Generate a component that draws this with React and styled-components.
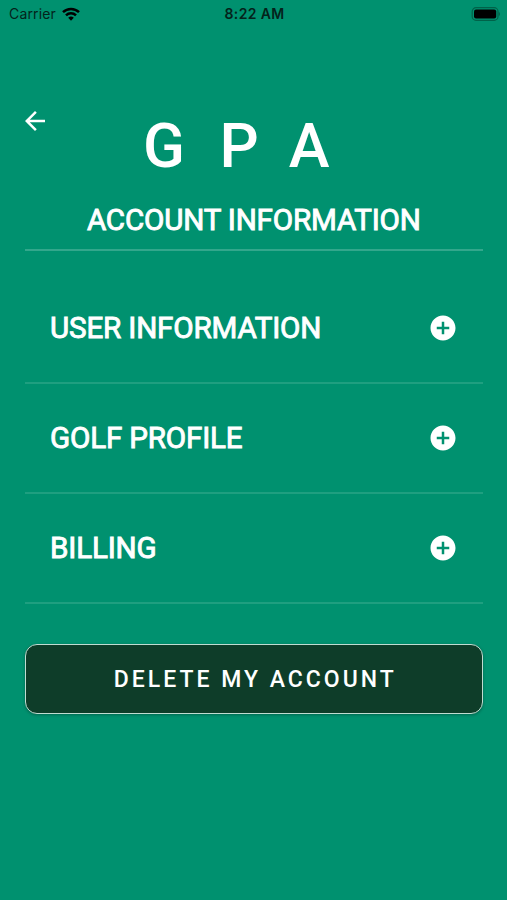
import React, { useState } from 'react';
import styled, { createGlobalStyle } from 'styled-components';
import { MdAddCircle, MdArrowBack } from 'react-icons/md';

const GlobalStyle = createGlobalStyle`
    * {
        box-sizing: border-box;
    }
    body {
        margin: 0;
        background-color: #00916f;
    }
`
const Container = styled.div`
    width: 100%;
    height: 100vh;
    display: flex;
    flex-direction: column;
    overflow: hidden;
    background-color: #00916f;
    color: white;
    font-family: Roboto, "Liberation Sans", sans-serif;
`
const StatusBar = styled.div`
    height: 28px;
    padding: 0 7px 0 9px;
    display: grid;
    grid-template-columns: 1fr auto 1fr;
    align-items: center;
    color: #04231b;
    font-family: Inter, "Liberation Sans", sans-serif;
    font-size: 14px;
    line-height: 28px;
`
const Carrier = styled.div`
    display: flex;
    align-items: center;
    gap: 6px;
    letter-spacing: 0.15px;
`
const Clock = styled.div`
    font-weight: 600;
    letter-spacing: 0.35px;
`
const Battery = styled.svg`
    justify-self: end;
`
const Header = styled.div`
    height: 172px;
    padding: 78px 20px 0;
    display: grid;
    grid-template-columns: 30px 1fr 30px;
`
const BackButton = styled.button`
    width: 30px;
    height: 30px;
    padding: 0;
    border: none;
    background-color: transparent;
    color: white;
    cursor: pointer;
    svg {
        display: block;
    }
`
const Logo = styled.h1`
    margin: 4px 0 0;
    font-size: 61.5px;
    font-weight: 500;
    line-height: 72px;
    letter-spacing: 34.5px;
    text-align: center;
    white-space: nowrap;
`
const Content = styled.div`
    padding: 0 24.5px 0 25px;
`
const Title = styled.h2`
    height: 51px;
    margin: 0 0 23px;
    border-bottom: 2px solid #33a78c;
    font-size: 29.6px;
    font-weight: 400;
    line-height: 40px;
    letter-spacing: -0.18px;
    text-align: center;
    white-space: nowrap;
    -webkit-text-stroke: 0.9px white;
`
const Section = styled.div`
    height: 110px;
    padding: 0 24.5px 0 25px;
    display: flex;
    align-items: center;
    justify-content: space-between;
    border-bottom: 2px solid #1f9f80;
    cursor: pointer;
`
const SectionTitle = styled.h3`
    margin: 0;
    font-size: 29.6px;
    font-weight: 400;
    line-height: 36px;
    letter-spacing: -0.18px;
    white-space: nowrap;
    -webkit-text-stroke: 0.9px white;
`
const Button = styled.button`
    width: 100%;
    height: 70px;
    margin-top: 40px;
    padding: 0 0 0 3px;
    border: 1px solid #c0dcd1;
    border-radius: 12px;
    background-color: #0e3d29;
    box-shadow: 0 1px 3px rgba(0, 0, 0, 0.3);
    color: white;
    font-family: inherit;
    font-size: 23px;
    font-weight: 500;
    letter-spacing: 3px;
    cursor: pointer;
`

const sections = [
    { id: 1, title: "USER INFORMATION" },
    { id: 2, title: "GOLF PROFILE" },
    { id: 3, title: "BILLING" },
]

const App = () => {
    const [active, setActive] = useState(null);

  return (
    <Container>
        <GlobalStyle/>
        <StatusBar>
            <Carrier>
                Carrier
                <svg width="18" height="14" viewBox="0 0 18 14" fill="none" stroke="#000" strokeWidth="2.5">
                    <path d="M1 5.2a11.4 11.4 0 0 1 16 0"/>
                    <path d="M4 8.4a7.1 7.1 0 0 1 10 0"/>
                    <path d="M9 13.7 6.2 10.8a4 4 0 0 1 5.6 0Z" fill="#000" stroke="none"/>
                </svg>
            </Carrier>
            <Clock>8:22 AM</Clock>
            <Battery width="30" height="14" viewBox="0 0 30 14">
                <rect x="2.2" y="0.7" width="25.8" height="12.6" rx="3.8" fill="none" stroke="#006249" strokeWidth="1.2"/>
                <rect x="4" y="2.5" width="22.2" height="9" rx="2" fill="#000"/>
                <path d="M28.8 5v4c1.5-.7 1.5-3.3 0-4Z" fill="#006249"/>
            </Battery>
        </StatusBar>
        <Header>
            <BackButton aria-label="Back">
                <MdArrowBack size={30}/>
            </BackButton>
            <Logo>GPA</Logo>
        </Header>
        <Content>
            <Title>ACCOUNT INFORMATION</Title>
            {sections.map((item)=>(
                <Section key={item.id} aria-expanded={active === item.id} onClick={()=>setActive(item.id)}>
                    <SectionTitle>{item.title}</SectionTitle>
                    <MdAddCircle size={30}/>
                </Section>
            ))}
            <Button>DELETE MY ACCOUNT</Button>
        </Content>
    </Container>
  )
}

export default App
